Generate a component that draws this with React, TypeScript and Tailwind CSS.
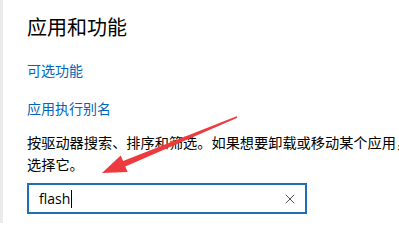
import { X } from 'lucide-react';

function Arrow() {
  // red annotation arrow drawn over the page
  return (
    <svg className="absolute left-0 top-0 pointer-events-none" width="399" height="223" viewBox="0 0 399 223">
      <polygon
        points="102,173 127.6,172.1 125.3,166.6 237.4,117.7 236.6,116.3 123.1,161 120.7,155.5"
        fill="#ec3a3f"
      />
    </svg>
  );
}

export default function App() {
  return (
    <div
      className="relative w-[399px] h-[223px] overflow-hidden bg-white flex"
      style={{ fontFamily: '"Noto Sans CJK SC", "Noto Sans", sans-serif' }}
    >
      <div className="w-[3px] bg-[#ebebeb] shrink-0" />
      <div className="flex flex-col shrink-0 pl-[24px] pt-[12px]">
        <h1 className="text-[20px] leading-[30px] text-black font-normal">应用和功能</h1>
        <a className="mt-[18px] text-[14px] leading-[20px] text-[#0067b8]">可选功能</a>
        <a className="mt-[18px] text-[14px] leading-[20px] text-[#0067b8]">应用执行别名</a>
        <p className="mt-[13px] whitespace-nowrap text-[14.2px] leading-[22px] text-black">
          按驱动器搜索、排序和筛选。如果想要卸载或移动某个应用，
          <br />
          选择它。
        </p>
        <div className="mt-[8px] w-[280px] h-[31px] border-2 border-[#1f6fb2] flex items-center pl-[10px] pr-[7px]">
          <span className="text-[14px] text-black" style={{ fontFamily: '"Open Sans", sans-serif' }}>flash</span>
          <span className="w-px h-[18px] bg-black ml-[1px]" />
          <X className="ml-auto w-[16px] h-[16px] text-[#444]" strokeWidth={1.4} />
        </div>
      </div>
      <Arrow />
    </div>
  );
}
